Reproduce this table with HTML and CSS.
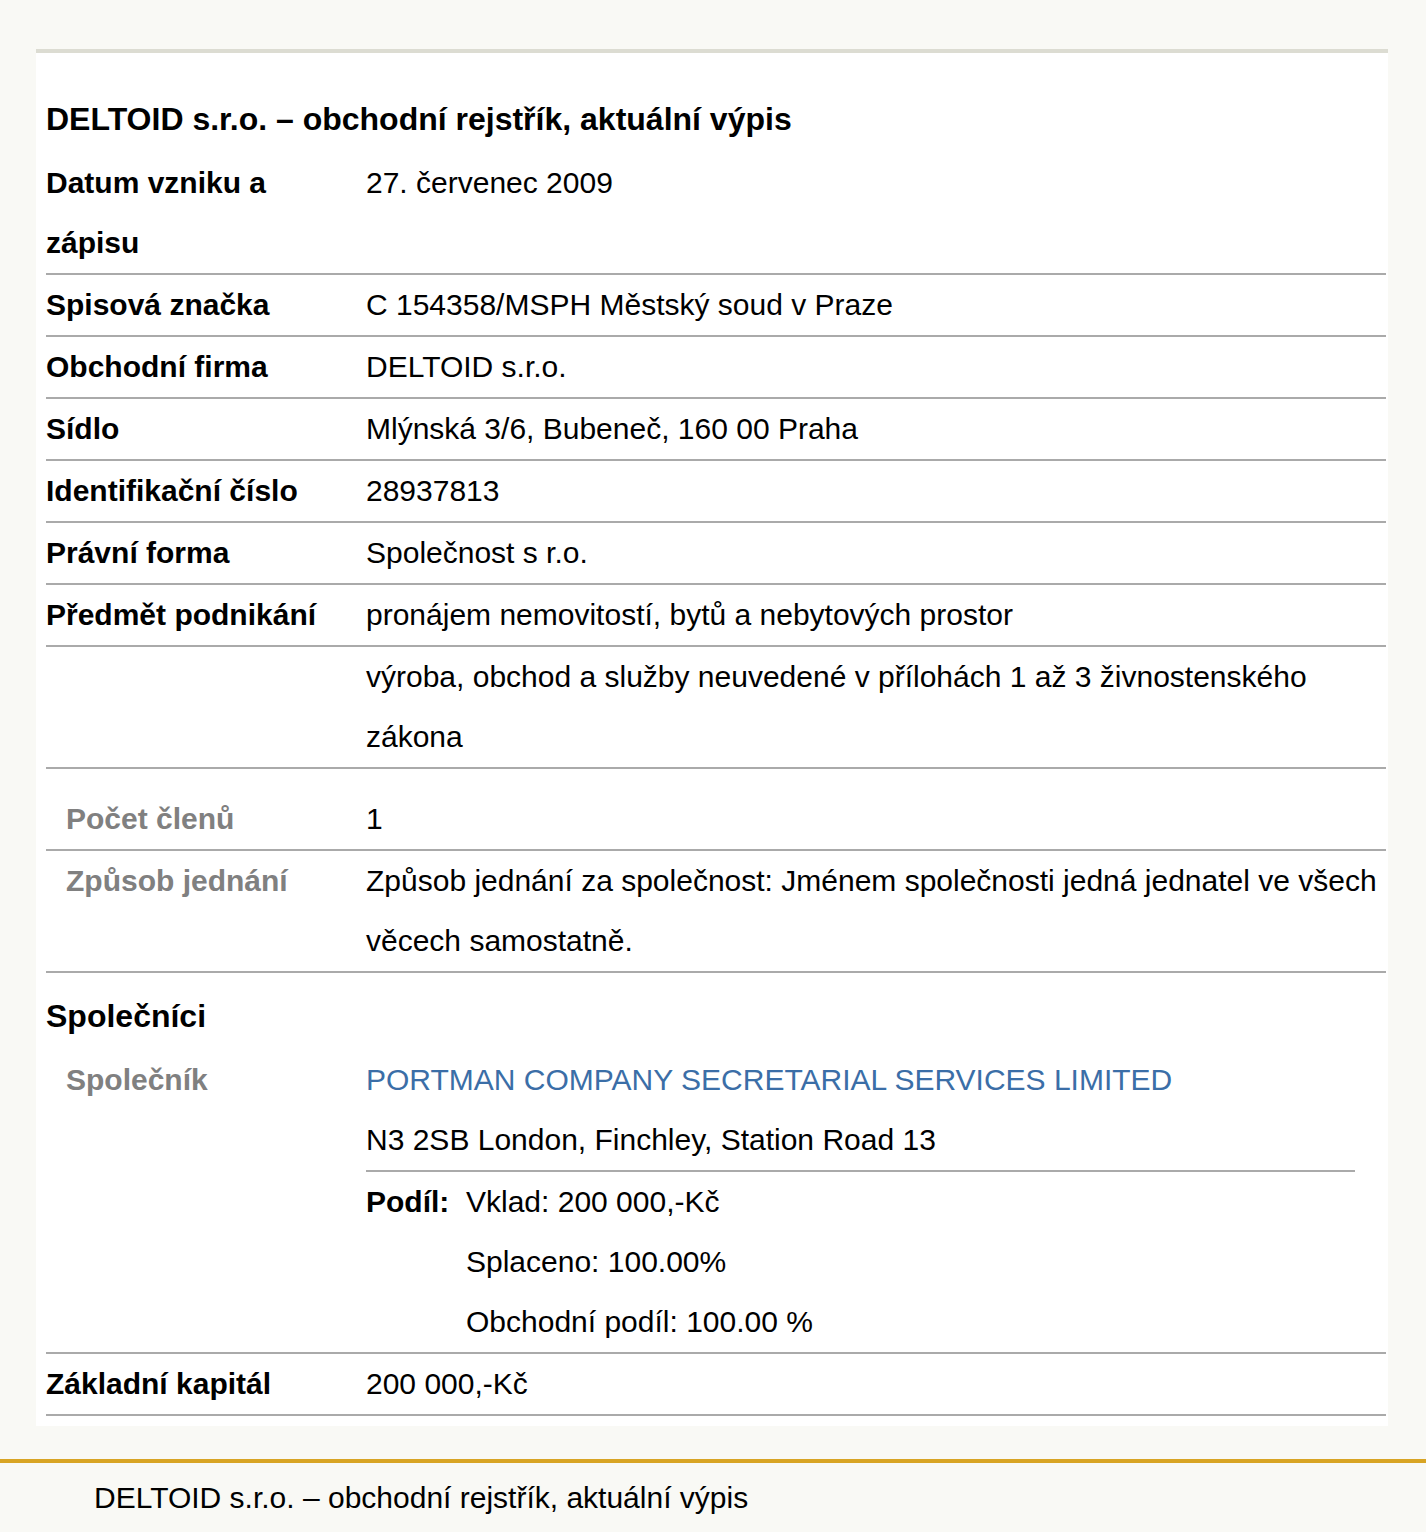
FILE: index.html
```html
<!DOCTYPE html>
<html lang="cs">
<head>
<meta charset="utf-8">
<title>DELTOID s.r.o. – obchodní rejstřík, aktuální výpis</title>
<link rel="stylesheet" href="styles.css">
</head>
<body>
<div class="page">
  <main class="card">
    <h1 class="title">DELTOID s.r.o. – obchodní rejstřík, aktuální výpis</h1>
    <div class="rows">
      <div class="row"><div class="label">Datum vzniku a zápisu</div><div class="value">27. červenec 2009</div></div>
      <div class="row"><div class="label">Spisová značka</div><div class="value">C 154358/MSPH Městský soud v Praze</div></div>
      <div class="row"><div class="label">Obchodní firma</div><div class="value">DELTOID s.r.o.</div></div>
      <div class="row"><div class="label">Sídlo</div><div class="value">Mlýnská 3/6, Bubeneč, 160 00 Praha</div></div>
      <div class="row"><div class="label">Identifikační číslo</div><div class="value">28937813</div></div>
      <div class="row"><div class="label">Právní forma</div><div class="value">Společnost s r.o.</div></div>
      <div class="row"><div class="label">Předmět podnikání</div><div class="value">pronájem nemovitostí, bytů a nebytových prostor</div></div>
      <div class="row"><div class="label"></div><div class="value">výroba, obchod a služby neuvedené v přílohách 1 až 3 živnostenského zákona</div></div>
      <div class="row row-first-sub"><div class="label sub">Počet členů</div><div class="value">1</div></div>
      <div class="row"><div class="label sub">Způsob jednání</div><div class="value">Způsob jednání za společnost: Jménem společnosti jedná jednatel ve všech věcech samostatně.</div></div>
      <div class="section-title">Společníci</div>
      <div class="row partner-row">
        <div class="label sub">Společník</div>
        <div class="value">
          <div class="partner-name">PORTMAN COMPANY SECRETARIAL SERVICES LIMITED</div>
          <div class="partner-address">N3 2SB London, Finchley, Station Road 13</div>
          <div class="share">
            <div class="share-label">Podíl:</div>
            <div class="share-values">
              <div>Vklad: 200 000,-Kč</div>
              <div>Splaceno: 100.00%</div>
              <div>Obchodní podíl: 100.00 %</div>
            </div>
          </div>
        </div>
      </div>
      <div class="row"><div class="label">Základní kapitál</div><div class="value">200 000,-Kč</div></div>
    </div>
  </main>
  <footer class="footer">DELTOID s.r.o. – obchodní rejstřík, aktuální výpis</footer>
</div>
</body>
</html>
```

FILE: styles.css
```css
html, body {
  margin: 0;
  padding: 0;
  background: #f9f9f5;
}

body {
  font-family: "Liberation Sans", Arial, sans-serif;
  font-size: 30px;
  line-height: 60px;
  color: #000;
}

.page {
  padding-top: 49px;
  min-height: 1532px;
  box-sizing: border-box;
}

.card {
  display: block;
  margin-left: 36px;
  width: 1352px;
  box-sizing: border-box;
  background: #fff;
  border-top: 4px solid #dcdcd2;
  padding: 0 2px 10px 10px;
}

.title {
  margin: 0 0 4px 0;
  padding-top: 36px;
  font-size: 32px;
  line-height: 60px;
  font-weight: bold;
}

.rows {
  width: 1340px;
}

.row {
  display: grid;
  grid-template-columns: 320px 1fr;
  border-bottom: 2px solid #aaaaaa;
}

.label {
  font-weight: bold;
  padding-right: 20px;
}

.label.sub {
  color: #808080;
  padding-left: 20px;
}

.row-first-sub {
  padding-top: 20px;
}

.section-title {
  font-weight: bold;
  font-size: 32px;
  padding-top: 13px;
  padding-bottom: 4px;
}

.partner-name {
  color: #3b6ea7;
}

.partner-address {
  border-bottom: 2px solid #aaaaaa;
  margin-right: 31px;
}

.share {
  display: grid;
  grid-template-columns: 100px 1fr;
}

.share-label {
  font-weight: bold;
}

.footer {
  margin-top: 33px;
  border-top: 4px solid #d8a424;
  padding: 5px 0 4px 94px;
  line-height: 60px;
}
```
